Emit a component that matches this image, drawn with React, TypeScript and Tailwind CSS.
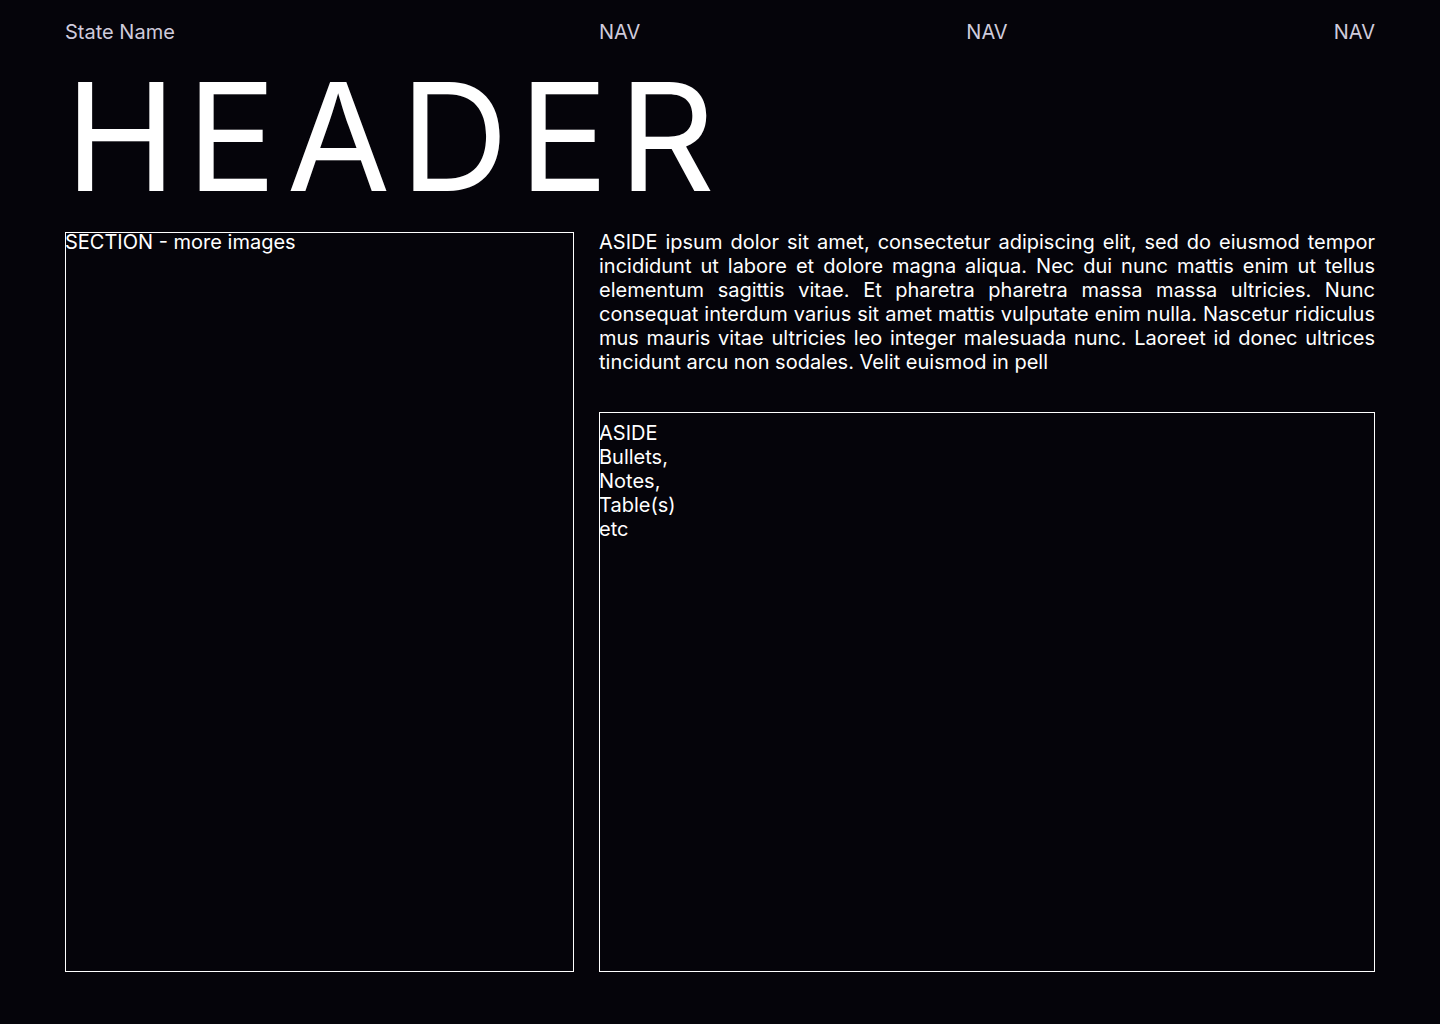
export default function App() {
  return (
    <div
      className="min-h-screen bg-[#05040a] text-white px-[65px] pt-5 pb-[52px]"
      style={{ fontFamily: "Inter, 'Noto Sans', sans-serif" }}
    >
      <nav className="grid grid-cols-[509px_1fr] gap-[25px] text-[20px] leading-6 text-[#cfcbdc]">
        <span>State Name</span>
        <div className="flex justify-between">
          <span>NAV</span>
          <span>NAV</span>
          <span>NAV</span>
        </div>
      </nav>

      <h1 className="mt-[18px] text-[150px] leading-[150px] tracking-[10px] font-normal">
        HEADER
      </h1>

      <main className="mt-5 grid grid-cols-[509px_1fr] gap-[25px] text-[20px] leading-6">
        <section className="h-[740px] border border-white">
          <p className="-mt-[3px] -ml-px">SECTION - more images</p>
        </section>
        <aside className="flex flex-col">
          <p className="text-justify -mt-[2px]">
            ASIDE ipsum dolor sit amet, consectetur adipiscing elit, sed do
            eiusmod tempor incididunt ut labore et dolore magna aliqua. Nec dui
            nunc mattis enim ut tellus elementum sagittis vitae. Et pharetra
            pharetra massa massa ultricies. Nunc consequat interdum varius sit
            amet mattis vulputate enim nulla. Nascetur ridiculus mus mauris vitae
            ultricies leo integer malesuada nunc. Laoreet id donec ultrices
            tincidunt arcu non sodales. Velit euismod in pell
          </p>
          <div className="mt-[38px] flex-1 border border-white pt-2">
            <p className="-ml-px">ASIDE</p>
            <p className="-ml-px">Bullets,</p>
            <p className="-ml-px">Notes,</p>
            <p className="-ml-px">Table(s)</p>
            <p className="-ml-px">etc</p>
          </div>
        </aside>
      </main>
    </div>
  );
}
